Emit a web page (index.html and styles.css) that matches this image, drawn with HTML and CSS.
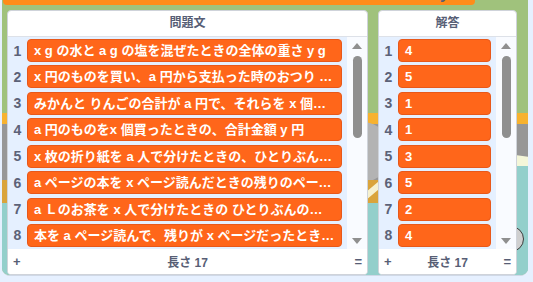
FILE: index.html
```html
<!DOCTYPE html>
<html lang="ja">
<head>
<meta charset="utf-8">
<link rel="stylesheet" href="styles.css">
</head>
<body>
<div class="stage">
  <div class="bd bd-orange"></div>
  <div class="bd bd-gray"></div>
  <div class="bd bd-circle"></div>
  <div class="bd bd-tan"></div>
  <div class="bd bd-cream-mid"></div>
  <div class="bd bd-teal"></div>
  <div class="bd bd-cream-right"></div>
  <div class="bd bd-teal-right"></div>
  <div class="bd bd-sprite"></div>
  <div class="topbar"><span class="topbar-text">y</span></div>

  <div class="monitors">
    <section class="mon mon-wide">
      <header class="mon-head">問題文</header>
      <div class="mon-body">
        <ol class="rows">
          <li class="row"><span class="idx">1</span><span class="item">x g の水と a g の塩を混ぜたときの全体の重さ y g</span></li>
          <li class="row"><span class="idx">2</span><span class="item">x 円のものを買い、a 円から支払った時のおつり y 円</span></li>
          <li class="row"><span class="idx">3</span><span class="item">みかんと りんごの合計が a 円で、それらを x 個買ったときの1個の値段 y 円</span></li>
          <li class="row"><span class="idx">4</span><span class="item">a 円のものをx 個買ったときの、合計金額 y 円</span></li>
          <li class="row"><span class="idx">5</span><span class="item">x 枚の折り紙を a 人で分けたときの、ひとりぶんの枚数 y 枚</span></li>
          <li class="row"><span class="idx">6</span><span class="item">a ページの本を x ページ読んだときの残りのページ数 y ページ</span></li>
          <li class="row"><span class="idx">7</span><span class="item">a Ｌのお茶を x 人で分けたときの ひとりぶんの量 y Ｌ</span></li>
          <li class="row"><span class="idx">8</span><span class="item">本を a ページ読んで、残りが x ページだったときの本全体のページ数 y ページ</span></li>
          <li class="row"><span class="idx">9</span><span class="item">x m のリボンを a 人で分けたときの ひとりぶんの長さ y m</span></li>
        </ol>
        <div class="scroll">
          <span class="arrow arrow-up"></span>
          <span class="thumb"></span>
          <span class="arrow arrow-down"></span>
        </div>
      </div>
      <footer class="mon-foot"><span class="plus">+</span><span class="len">長さ 17</span><span class="eq">=</span></footer>
    </section>

    <section class="mon mon-narrow">
      <header class="mon-head">解答</header>
      <div class="mon-body">
        <ol class="rows">
          <li class="row"><span class="idx">1</span><span class="item">4</span></li>
          <li class="row"><span class="idx">2</span><span class="item">5</span></li>
          <li class="row"><span class="idx">3</span><span class="item">1</span></li>
          <li class="row"><span class="idx">4</span><span class="item">1</span></li>
          <li class="row"><span class="idx">5</span><span class="item">3</span></li>
          <li class="row"><span class="idx">6</span><span class="item">5</span></li>
          <li class="row"><span class="idx">7</span><span class="item">2</span></li>
          <li class="row"><span class="idx">8</span><span class="item">4</span></li>
          <li class="row"><span class="idx">9</span><span class="item">2</span></li>
        </ol>
        <div class="scroll">
          <span class="arrow arrow-up"></span>
          <span class="thumb"></span>
          <span class="arrow arrow-down"></span>
        </div>
      </div>
      <footer class="mon-foot"><span class="plus">+</span><span class="len">長さ 17</span><span class="eq">=</span></footer>
    </section>
  </div>
</div>
</body>
</html>
```

FILE: styles.css
```css
* { box-sizing: border-box; }
html, body { margin: 0; padding: 0; }
body {
  background: #e6f0ff;
  width: 533px;
  height: 282px;
  overflow: hidden;
  font-family: "Liberation Sans", "Noto Sans CJK JP", sans-serif;
}
.stage {
  position: relative;
  margin-left: 2px;
  width: 526px;
  height: 276px;
  background: #a0c27c;
  border-radius: 0 0 8px 8px;
  border-bottom: 1px solid #cfd8e6;
  overflow: hidden;
}
.bd { position: absolute; }
.bd-orange { left: 0; right: 0; top: 113px; height: 11px; background: #f7b22f; }
.bd-gray { left: 0; right: 0; top: 124px; height: 56px; background: #979797; }
.bd-circle { left: 330px; top: 122px; width: 60px; height: 60px; border-radius: 50%; background: #b3b3b3; }
.bd-tan { left: 0; right: 0; top: 180px; height: 23px; background: #daa43c; }
.bd-cream-mid { left: 350px; top: 188px; width: 40px; height: 6px; background: #f6f1d0; transform: rotate(-40deg); }
.bd-teal { left: 0; right: 0; top: 203px; bottom: 0; background: #93cfcb; }
.bd-cream-right { left: 500px; right: 0; top: 155px; height: 12px; background: #f4f6d9; transform: skewY(8deg); }
.bd-teal-right { left: 500px; right: 0; top: 166px; bottom: 0; background: #93cfcb; }
.bd-sprite { left: 496px; top: 226px; width: 26px; height: 26px; border-radius: 50%; background: #cfcfcf; border: 1px solid #3c3c3c; }

.topbar {
  position: absolute;
  left: 1px;
  top: 0;
  width: 472px;
  height: 5px;
  background: #ff8c1a;
  border-radius: 0 0 4px 4px;
  overflow: hidden;
}
.topbar-text {
  position: absolute;
  left: 437px;
  top: -14px;
  font-size: 16px;
  line-height: 16px;
  font-weight: bold;
  color: #575e75;
}

.monitors {
  display: flex;
  align-items: flex-start;
  gap: 10px;
  padding: 10px 0 0 5px;
}
.mon {
  position: relative;
  display: flex;
  flex-direction: column;
  height: 265px;
  background: #fff;
  border: 1px solid #cfd3da;
  border-radius: 4px;
  overflow: hidden;
}
.mon-wide { width: 361px; }
.mon-narrow { width: 139px; }
.mon-head {
  height: 26px;
  line-height: 25px;
  text-align: center;
  font-size: 12px;
  font-weight: bold;
  color: #575e75;
  border-bottom: 1px solid #dde1e8;
  flex: none;
}
.mon-body {
  flex: 1;
  display: flex;
  background: #e5f0ff;
  overflow: hidden;
}
.rows {
  list-style: none;
  margin: 0;
  padding: 2px 0 0 0;
  flex: 1;
  min-width: 0;
}
.row {
  display: flex;
  align-items: center;
  height: 23px;
  margin-bottom: 3.43px;
}
.idx {
  width: 19px;
  flex: none;
  text-align: center;
  font-size: 14px;
  font-weight: bold;
  color: #5c6278;
}
.item {
  flex: 1;
  min-width: 0;
  height: 23px;
  line-height: 21px;
  padding: 0 6px;
  background: #ff661a;
  border: 1px solid #e8581a;
  border-radius: 4px;
  color: #fff;
  font-size: 13px;
  font-weight: bold;
  white-space: nowrap;
  overflow: hidden;
  text-overflow: ellipsis;
}
.scroll {
  position: relative;
  flex: none;
  width: 20px;
  margin-left: 5px;
  background: #f9fbff;
  display: flex;
  flex-direction: column;
  align-items: center;
}
.arrow {
  width: 0;
  height: 0;
  border-left: 5px solid transparent;
  border-right: 5px solid transparent;
}
.arrow-up {
  margin-top: 6px;
  border-bottom: 6px solid #8f8f8f;
}
.thumb {
  margin-top: 7px;
  width: 9px;
  height: 82px;
  border-radius: 5px;
  background: #8f8f8f;
}
.arrow-down {
  margin-top: auto;
  margin-bottom: 5px;
  border-top: 6px solid #8f8f8f;
}
.mon-foot {
  flex: none;
  height: 25px;
  display: flex;
  align-items: center;
  justify-content: space-between;
  padding: 0 5px 0 5px;
  background: #fff;
  color: #575e75;
  font-weight: bold;
}
.plus { font-size: 13px; width: 20px; }
.eq { font-size: 13px; width: 20px; text-align: right; }
.len { font-size: 12px; }
```
